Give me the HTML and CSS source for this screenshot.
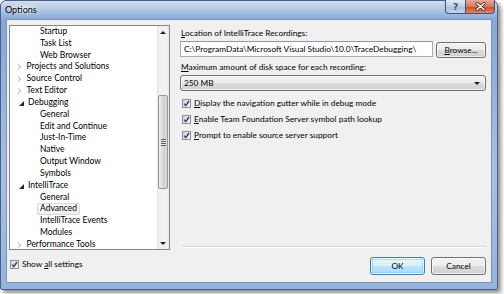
FILE: index.html
```html
<!DOCTYPE html>
<html lang="en">

<head>
    <meta charset="UTF-8">
    <title>Options</title>
    <link rel="stylesheet" href="styles.css">
</head>

<body>

    <div class="window">
        <div class="titlebar">
            <span class="title">Options</span>
            <div class="caption-btns">
                <span class="cap-btn help">?</span>
                <span class="cap-btn close">
                    <svg width="11" height="9" viewBox="0 0 11 9">
                        <path d="M2 1.5 L9 7.5 M9 1.5 L2 7.5" stroke="#5a2a22" stroke-width="3.2" stroke-linecap="round"/>
                        <path d="M2 1.5 L9 7.5 M9 1.5 L2 7.5" stroke="#ffffff" stroke-width="1.6" stroke-linecap="round"/>
                    </svg>
                </span>
            </div>
        </div>

        <div class="client">
            <div class="main">
                <!-- category tree -->
                <div class="tree">
                    <ul class="tree-list">
                        <li class="leaf"><span class="txt">Startup</span></li>
                        <li class="leaf"><span class="txt">Task List</span></li>
                        <li class="leaf"><span class="txt">Web Browser</span></li>
                        <li class="node"><span class="twisty closed"></span><span class="txt">Projects and Solutions</span></li>
                        <li class="node"><span class="twisty closed"></span><span class="txt">Source Control</span></li>
                        <li class="node"><span class="twisty closed"></span><span class="txt">Text Editor</span></li>
                        <li class="node"><span class="twisty open"></span><span class="txt">Debugging</span></li>
                        <li class="leaf"><span class="txt">General</span></li>
                        <li class="leaf"><span class="txt">Edit and Continue</span></li>
                        <li class="leaf"><span class="txt">Just-In-Time</span></li>
                        <li class="leaf"><span class="txt">Native</span></li>
                        <li class="leaf"><span class="txt">Output Window</span></li>
                        <li class="leaf"><span class="txt">Symbols</span></li>
                        <li class="node"><span class="twisty open"></span><span class="txt">IntelliTrace</span></li>
                        <li class="leaf"><span class="txt">General</span></li>
                        <li class="leaf selected"><span class="txt">Advanced</span></li>
                        <li class="leaf"><span class="txt">IntelliTrace Events</span></li>
                        <li class="leaf"><span class="txt">Modules</span></li>
                        <li class="node"><span class="twisty closed"></span><span class="txt">Performance Tools</span></li>
                    </ul>
                    <div class="vscroll">
                        <div class="sb-arrow"><span class="tri up"></span></div>
                        <div class="sb-track">
                            <div class="sb-thumb"><span class="grip"></span></div>
                        </div>
                        <div class="sb-arrow"><span class="tri down"></span></div>
                    </div>
                </div>

                <!-- IntelliTrace > Advanced page -->
                <div class="page">
                    <div class="label first"><u>L</u>ocation of IntelliTrace Recordings:</div>
                    <div class="path-row">
                        <div class="textbox">C:\ProgramData\Microsoft Visual Studio\10.0\TraceDebugging\</div>
                        <button type="button" class="btn browse"><u>B</u>rowse...</button>
                    </div>
                    <div class="label"><u>M</u>aximum amount of disk space for each recording:</div>
                    <div class="combo">
                        <span>250 MB</span>
                        <span class="tri down"></span>
                    </div>
                    <div class="checks">
                        <div class="check-row"><span class="checkbox"></span><span><u>D</u>isplay the navigation gutter while in debug mode</span></div>
                        <div class="check-row"><span class="checkbox"></span><span><u>E</u>nable Team Foundation Server symbol path lookup</span></div>
                        <div class="check-row"><span class="checkbox"></span><span><u>P</u>rompt to enable source server support</span></div>
                    </div>
                    <div class="separator"></div>
                </div>
            </div>

            <div class="footer">
                <div class="check-row show-all"><span class="checkbox"></span><span>Show <u>a</u>ll settings</span></div>
                <div class="buttons">
                    <button type="button" class="btn default">OK</button>
                    <button type="button" class="btn">Cancel</button>
                </div>
            </div>
        </div>
    </div>

</body>

</html>
```

FILE: styles.css
```css
* {
    box-sizing: border-box;
}

body {
    margin: 0;
    width: 504px;
    height: 294px;
    background: #ffffff;
    font-family: Lato, 'Open Sans', sans-serif;
    font-size: 8.3px;
    color: #000;
}

.window {
    width: 498px;
    height: 290px;
    border: 1px solid #46618a;
    border-radius: 6px 6px 2px 2px;
    padding: 0 5px 6px 5px;
    background: linear-gradient(180deg, #d3deec 0px, #b0c6e5 9px, #86a7d7 19px, #a7c0e2 60%, #95b3dd 100%);
    box-shadow: 3px 3px 4px rgba(0, 0, 0, 0.45);
    display: flex;
    flex-direction: column;
}

/* title bar */

.titlebar {
    height: 18px;
    display: flex;
    align-items: flex-start;
}

.title {
    margin-top: 3px;
    margin-left: -1px;
    padding: 0 4px 0 0;
    font-size: 9px;
    background: radial-gradient(ellipse at center, rgba(255, 255, 255, 0.8), rgba(255, 255, 255, 0) 72%);
}

.caption-btns {
    margin-left: auto;
    margin-right: -3px;
    display: flex;
    margin-top: -1px;
}

.cap-btn {
    height: 14px;
    border: 1px solid #3e5677;
    border-top: none;
    display: flex;
    align-items: center;
    justify-content: center;
}

.help {
    width: 20px;
    border-radius: 0 0 0 4px;
    border-right: none;
    background: linear-gradient(180deg, #e3ebf5, #bccde4 50%, #a4bcdc 51%, #c3d5ec);
    color: #3d4d66;
    font-size: 9px;
    font-weight: bold;
    font-family: 'DejaVu Sans', sans-serif;
}

.close {
    width: 30px;
    border-radius: 0 0 4px 0;
    background: linear-gradient(180deg, #e9a99b, #d6765f 50%, #c44a30 51%, #d88a6d);
}

/* client area */

.client {
    flex: 1;
    background: #f0f0f0;
    border: 1px solid #7c93b3;
    display: flex;
    flex-direction: column;
}

.main {
    display: flex;
    padding: 5px 0 0 2px;
}

.tree {
    width: 161px;
    height: 225px;
    border: 1px solid #828790;
    background: #fff;
    display: flex;
    overflow: hidden;
    font-size: 8.5px;
}

.tree-list {
    list-style: none;
    margin: 0;
    padding: 0;
    flex: 1;
}

.tree-list li {
    height: 11.83px;
    line-height: 11.83px;
    display: flex;
    align-items: center;
    white-space: nowrap;
}

.tree-list .leaf .txt {
    margin-left: 27px;
    padding: 0 2px;
    border: 1px solid transparent;
    line-height: 9.8px;
    border-radius: 1px;
}

.tree-list .selected .txt {
    border-color: #d9d9d9;
    background: linear-gradient(180deg, #fafafa, #efefef);
}

.twisty {
    width: 5px;
    height: 8px;
    margin-left: 8px;
    margin-right: 4px;
    position: relative;
}

.twisty.closed {
    width: 0;
    height: 0;
    border-style: solid;
    border-width: 3.5px 0 3.5px 3.5px;
    border-color: transparent transparent transparent #a6a6a6;
    margin-right: 5.5px;
}

.twisty.closed::after {
    content: '';
    position: absolute;
    left: -3.3px;
    top: -2px;
    border-style: solid;
    border-width: 2px 0 2px 2px;
    border-color: transparent transparent transparent #fff;
}

.twisty.open {
    width: 0;
    height: 0;
    margin-top: 1px;
    border-style: solid;
    border-width: 0 0 5px 5px;
    border-color: transparent transparent #2b2b2b transparent;
    margin-left: 9px;
    margin-right: 4px;
}

/* scrollbar */

.vscroll {
    width: 12px;
    display: flex;
    flex-direction: column;
    background: linear-gradient(90deg, #e2e2e2, #f1f1f1 2px, #f1f1f1 10px, #e6e6e6);
}

.sb-arrow {
    height: 12px;
    display: flex;
    align-items: center;
    justify-content: center;
}

.sb-track {
    flex: 1;
    padding: 57px 1px 48px 1px;
}

.sb-thumb {
    height: 100%;
    border: 1px solid #989898;
    border-radius: 2px;
    background: linear-gradient(90deg, #eeeeee, #dcdcdc 45%, #d0d0d0 55%, #dadada);
    display: flex;
    align-items: center;
    justify-content: center;
}

.grip {
    width: 5px;
    height: 7px;
    background: repeating-linear-gradient(180deg, #5b5b5b 0, #5b5b5b 1px, #e9e9e9 1px, #e9e9e9 2px);
}

.tri {
    width: 0;
    height: 0;
    border-style: solid;
}

.tri.up {
    border-width: 0 3px 3px 3px;
    border-color: transparent transparent #1e1e1e transparent;
}

.tri.down {
    border-width: 3px 3px 0 3px;
    border-color: #1e1e1e transparent transparent transparent;
}

/* settings page */

.page {
    width: 306px;
    height: 225px;
    margin-left: 10px;
    display: flex;
    flex-direction: column;
}

.label {
    height: 12px;
    line-height: 12px;
    margin-top: 3px;
    padding-left: 1px;
    white-space: nowrap;
}

.label.first {
    margin-top: 2px;
}

.path-row {
    display: flex;
    align-items: flex-start;
    margin-top: 2px;
}

.textbox {
    width: 253px;
    height: 16px;
    line-height: 14px;
    border: 1px solid #abadb3;
    border-top-color: #8e9aa9;
    background: #fff;
    padding-left: 3px;
    white-space: nowrap;
    overflow: hidden;
}

.btn {
    height: 16px;
    padding: 0;
    font-family: inherit;
    font-size: inherit;
    color: #000;
    border: 1px solid #707070;
    border-radius: 3px;
    background: linear-gradient(180deg, #f2f2f2, #ebebeb 50%, #dddddd 51%, #cfcfcf);
    box-shadow: inset 0 0 0 1px rgba(255, 255, 255, 0.7);
}

.browse {
    width: 50px;
    margin-left: 3px;
    margin-top: 1px;
}

.combo {
    margin-top: 2px;
    height: 16px;
    border: 1px solid #707070;
    border-radius: 3px;
    background: linear-gradient(180deg, #f2f2f2, #ebebeb 50%, #dddddd 51%, #cfcfcf);
    box-shadow: inset 0 0 0 1px rgba(255, 255, 255, 0.7);
    display: flex;
    align-items: center;
    justify-content: space-between;
    padding: 0 5px 0 3px;
}

.checks {
    margin-top: 4px;
    padding-left: 2px;
}

.check-row {
    height: 16px;
    display: flex;
    align-items: center;
    white-space: nowrap;
}

.checkbox {
    width: 9px;
    height: 9px;
    margin-right: 3px;
    border: 1px solid #8e8f8f;
    background:
        url("data:image/svg+xml,%3Csvg xmlns='http://www.w3.org/2000/svg' width='7' height='7' viewBox='0 0 7 7'%3E%3Cpath d='M1 3.6 L2.8 5.6 L6 1' fill='none' stroke='%232a3f7a' stroke-width='1.4'/%3E%3C/svg%3E") center / 7px 7px no-repeat,
        linear-gradient(135deg, #d6d6d6, #f6f6f6);
}

.separator {
    margin-top: auto;
    margin-bottom: 2px;
    margin-left: 2px;
    height: 2px;
    border-top: 1px solid #d5d5d5;
    border-bottom: 1px solid #ffffff;
}

/* footer */

.footer {
    display: flex;
    align-items: flex-start;
    padding: 7px 5px 0 3px;
}

.show-all {
    height: 14px;
}

.buttons {
    margin-left: auto;
    display: flex;
    gap: 6px;
}

.buttons .btn {
    width: 55px;
    height: 18px;
}

.btn.default {
    border-color: #3c7fb1;
    background: linear-gradient(180deg, #eaf6fd, #d9f0fc 50%, #bee6fd 51%, #a7d9f5);
    box-shadow: inset 0 0 0 1px rgba(255, 255, 255, 0.8), inset 0 0 0 2px rgba(120, 200, 240, 0.5);
}
```
